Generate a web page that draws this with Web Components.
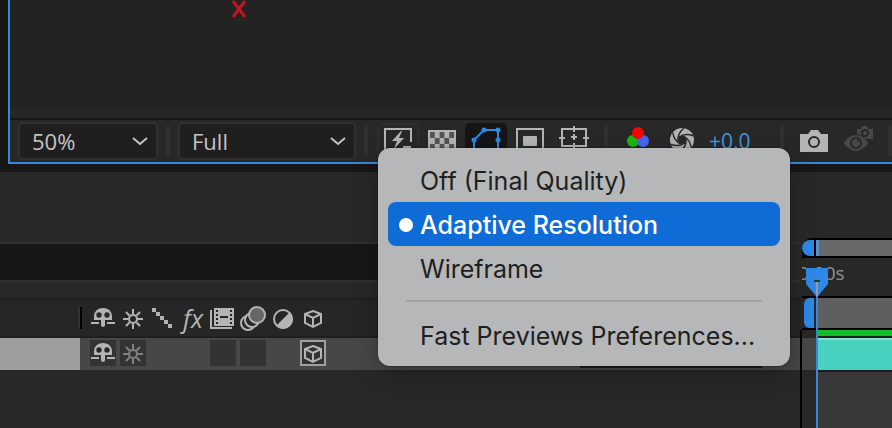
<!DOCTYPE html>
<html lang="en">
<head>
<meta charset="utf-8">
<meta name="viewport" content="width=device-width, initial-scale=1">
<title>Composition</title>
<style>
html, body {
    height: 100%;
}
body {
    margin: 0;
    background: #171717;
    color: #b8b8b8;
    font-family: "Open Sans", "Noto Sans", sans-serif;
    overflow: hidden;
    --blue: #3a87d9;
    --panel: #282828;
    --light: #b4b4b4;
}
</style>
</head>
<body>
<ae-workspace></ae-workspace>
<script>
class Widget extends HTMLElement {
    constructor() {
        super();
        this.attachShadow({ mode: "open" });
    }
    connectedCallback() {
        this.shadowRoot.innerHTML = `<style>
            :host { display: block; box-sizing: border-box; }
            * { box-sizing: border-box; }
            ${this.css()}
        </style>${this.render()}`;
    }
    css() {
        return "";
    }
    render() {
        return "<slot></slot>";
    }
}

const box = (x, y, w, h, fill = "currentColor") => `<rect x="${x}" y="${y}" width="${w}" height="${h}" fill="${fill}"/>`;
const dot = (x, y, r, fill = "currentColor") => `<circle cx="${x}" cy="${y}" r="${r}" fill="${fill}"/>`;
const line = (d, width = 2, color = "currentColor") => `<path d="${d}" fill="none" stroke="${color}" stroke-width="${width}"/>`;
const spin = (count, x, y, content) => Array.from({ length: count }, (_, i) =>
    `<g transform="rotate(${i * 360 / count} ${x} ${y})">${content}</g>`).join("");

function checker() {
    let html = "";
    for (let row = 0; row < 4; row++) {
        for (let col = 0; col < 5; col++) {
            if ((row + col) % 2 === 0) {
                html += box(3 + col * 4.8, 6 + row * 6, 4.8, 6, "#555");
            }
        }
    }
    return html;
}

function sprockets() {
    let html = "";
    for (let y of [5, 9, 13, 17]) {
        html += box(6, y, 2, 2, "#262626") + box(20, y, 2, 2, "#262626");
    }
    return html;
}

// toolbar glyphs are drawn on a 30px grid, switch glyphs on a 26px grid
const ICONS = {
    chevron: [16, line("M1 5l7 6 7-6")],
    cross: [18, line("M3 1l12 16M15 1L3 17", 3)],
    fast: [30, line("M2 28V3h26v13M20 21h8") + `<path d="M18 5L9 15h5l-3 8 10-11h-5l3-7z" fill="currentColor"/>`],
    grid: [30, box(1, 4, 28, 26) + checker()],
    mask: [30, line("M3 26V14L13 4h14v22") + dot(3, 14, 2.5) + dot(13, 4, 2.5) + dot(27, 4, 2.5) + dot(27, 14, 2.5)],
    region: [30, line("M2 3h26v24H2z") + `<rect x="8" y="10" width="14" height="10" rx="1" fill="currentColor"/>`],
    guides: [30, line("M3 3h24v17H3zM15 0v6M15 17v6M0 12h6M24 12h6M12 11h6M15 8v6")],
    channels: [30, dot(10, 15, 6, "#1db80f") + dot(20, 15, 6, "#4468f5") + dot(15, 7, 6, "#f80404")],
    aperture: [30, dot(15, 14, 12) + dot(15, 14, 4, "#282828") + spin(6, 15, 14, line("M11 15Q10 8 17 2", 1.4, "#282828"))],
    camera: [30, `<path d="M1 8h8l3-4h7l3 4h7v18H1z" fill="currentColor"/><circle cx="15" cy="16" r="5" fill="none" stroke="#282828" stroke-width="2"/>`],
    snapshot: [30, `<path d="M14 3h4l1-3h5l1 3h5v10h-7l-9-4z" fill="currentColor"/><circle cx="22" cy="7" r="3" fill="none" stroke="#282828" stroke-width="2"/>
        <path d="M0 17Q13 0 26 17Q13 34 0 17z" fill="currentColor" stroke="#282828"/><circle cx="13" cy="17" r="6" fill="#282828"/>` + dot(13, 17, 4) + dot(15, 15, 1, "#282828")],
    shy: [26, `<path d="M4 15V11Q5 3 13 3T22 11V15Z" fill="currentColor"/><rect x="11" y="12" width="4" height="10" rx="2" fill="currentColor"/>` +
        dot(9, 10, 2.7, "#282828") + dot(17, 10, 2.7, "#282828") + line("M1 18h8M17 18h8")],
    sun: [26, line("M17 14a4 4 0 1 1-8 0a4 4 0 1 1 8 0z") + spin(8, 13, 14, line("M13 4v5"))],
    quality: [26, box(2, 3, 4, 4) + box(6, 7, 4, 4) + box(10, 11, 4, 4) + box(14, 15, 4, 4) + box(18, 19, 4, 4)],
    film: [26, box(4, 3, 20, 18) + sprockets() + line("M1 5v18h21") + box(10, 11, 8, 2, "#262626")],
    blur: [26, `<g stroke="currentColor" stroke-width="2" fill="#282828"><circle cx="8" cy="18" r="7"/><circle cx="12" cy="15" r="7"/><circle cx="17" cy="10" r="8" fill="#666"/></g>`],
    adjust: [26, `<circle cx="13" cy="14" r="9" fill="none" stroke="currentColor" stroke-width="2"/><path d="M20 7L6 21A9 9 0 0 0 20 7z" fill="currentColor"/>`],
    cube: [26, line("M13 6l8 3v9l-8 4-8-4V9zM5 9l8 4 8-4M13 13v9")]
};

customElements.define("ae-icon", class extends Widget {
    css() {
        return `
            :host { flex: none; }
            svg { display: block; }
        `;
    }
    render() {
        let [size, content] = ICONS[this.getAttribute("name")];
        return `<svg width="${size}" height="${size}" viewBox="0 0 ${size} ${size}" aria-hidden="true">${content}</svg>`;
    }
});

customElements.define("ae-dropdown", class extends Widget {
    css() {
        return `
            :host { display: grid; align-items: center; flex: none; height: 38px; }
            select, ae-icon { grid-area: 1 / 1; }
            select {
                appearance: none;
                width: 100%;
                height: 100%;
                padding: 0 40px 0 12px;
                border: 2px solid #303030;
                border-radius: 5px;
                background: #1f1f1f;
                color: #c4c4c4;
                font: 500 22px/32px "Open Sans", sans-serif;
            }
            ae-icon { justify-self: end; margin-right: 10px; color: #c4c4c4; pointer-events: none; }
        `;
    }
    render() {
        let options = this.getAttribute("options").split(",");
        return `<select aria-label="${this.getAttribute("label")}">
            ${options.map(e => `<option>${e}</option>`).join("")}
        </select><ae-icon name="chevron"></ae-icon>`;
    }
});

customElements.define("ae-tool", class extends Widget {
    css() {
        return `
            :host { flex: none; width: 42px; height: 36px; color: var(--light); }
            :host([framed]) button { border: 2px solid #2e2e2e; }
            :host([active]) { color: #2e88e6; }
            :host([active]) button { background: #151515; }
            :host([disabled]) { color: #484848; }
            :host([wide]) { width: 66px; color: #4297de; }
            :host([wide]) button { justify-content: flex-start; padding: 0 4px; }
            button {
                display: flex;
                align-items: center;
                justify-content: center;
                width: 100%;
                height: 100%;
                padding: 0;
                border: 0;
                border-radius: 5px;
                background: none;
                color: inherit;
                font: 500 21px/32px "Open Sans", sans-serif;
            }
        `;
    }
    render() {
        let name = this.getAttribute("name");
        return `<button type="button" aria-label="${this.getAttribute("label")}">
            ${name ? `<ae-icon name="${name}"></ae-icon>` : "<slot></slot>"}
        </button>`;
    }
});

customElements.define("ae-toolbar", class extends Widget {
    css() {
        return `
            :host {
                display: flex;
                align-items: center;
                gap: 8px;
                height: 44px;
                padding-left: 8px;
                border-top: 2px solid #171717;
                background: var(--panel);
                overflow: hidden;
            }
            .zoom { width: 140px; }
            .resolution { width: 178px; }
            .group { display: flex; flex: none; gap: 2px; padding: 0 1px; }
            hr { flex: none; width: 4px; height: 30px; margin: 0; border: 0; background: #303030; }
        `;
    }
    render() {
        return `
            <ae-dropdown class="zoom" label="Magnification" options="50%,100%,200%"></ae-dropdown>
            <hr>
            <ae-dropdown class="resolution" label="Resolution" options="Full,Half,Third,Quarter"></ae-dropdown>
            <hr>
            <div class="group">
                <ae-tool name="fast" label="Fast previews" framed></ae-tool>
                <ae-tool name="grid" label="Transparency grid"></ae-tool>
                <ae-tool name="mask" label="Mask visibility" active></ae-tool>
                <ae-tool name="region" label="Region of interest"></ae-tool>
                <ae-tool name="guides" label="Grid and guides"></ae-tool>
            </div>
            <hr>
            <div class="group">
                <ae-tool name="channels" label="Channels"></ae-tool>
                <ae-tool name="aperture" label="Reset exposure"></ae-tool>
                <ae-tool label="Exposure" wide>+0.0</ae-tool>
            </div>
            <hr>
            <div class="group">
                <ae-tool name="camera" label="Take snapshot"></ae-tool>
                <ae-tool name="snapshot" label="Show snapshot" disabled></ae-tool>
            </div>
            <hr>
        `;
    }
});

customElements.define("ae-viewer", class extends Widget {
    css() {
        return `
            :host {
                margin: 0 0 8px 8px;
                border: solid var(--blue);
                border-width: 0 0 2px 2px;
            }
            .canvas { position: relative; height: 110px; background: #232323; }
            .anchor { position: absolute; left: 220px; top: 0; color: #c01420; }
            .edge { height: 8px; background: #272727; }
        `;
    }
    render() {
        return `
            <div class="canvas"><ae-icon class="anchor" name="cross"></ae-icon></div>
            <div class="edge"></div>
            <ae-toolbar></ae-toolbar>
        `;
    }
});

customElements.define("ae-switches", class extends Widget {
    css() {
        return `
            :host { display: flex; gap: 4px; color: var(--light); }
            span, button {
                display: flex;
                align-items: center;
                justify-content: center;
                flex: none;
                width: 26px;
                height: 26px;
                padding: 0;
                border: 0;
                background: none;
                color: inherit;
            }
            i { font: italic 25px/26px "Open Sans", sans-serif; }
            button { background: #333; }
            .dim { color: #808080; }
            .on { border: 2px solid #a0a0a0; }
        `;
    }
    render() {
        if (this.hasAttribute("layer")) {
            return `
                <button type="button" aria-label="Shy"><ae-icon name="shy"></ae-icon></button>
                <button type="button" aria-label="Collapse" class="dim"><ae-icon name="sun"></ae-icon></button>
                <span></span>
                <span></span>
                <button type="button" aria-label="Frame blending"></button>
                <button type="button" aria-label="Motion blur"></button>
                <span></span>
                <button type="button" aria-label="3D layer" class="on"><ae-icon name="cube"></ae-icon></button>
            `;
        }
        return ["shy", "sun", "quality", "fx", "film", "blur", "adjust", "cube"].map(e =>
            `<span>${e === "fx" ? "<i>fx</i>" : `<ae-icon name="${e}"></ae-icon>`}</span>`).join("");
    }
});

customElements.define("ae-layers", class extends Widget {
    css() {
        return `
            :host { flex: 1; min-width: 0; background: var(--panel); }
            .top { height: 72px; border-bottom: 2px solid #303030; }
            .search { height: 36px; margin-right: 100px; background: #171717; }
            .strip { height: 18px; border-top: 2px solid #303030; }
            .header {
                display: flex;
                align-items: center;
                gap: 8px;
                height: 40px;
                padding-left: 78px;
                border: solid #1e1e1e;
                border-width: 2px 0;
                background: #262626;
            }
            .divider { width: 4px; height: 22px; border: solid #333; border-width: 0 0 0 2px; background: #000; }
            .layer { display: flex; height: 32px; padding-right: 38px; background: #474747; }
            .name { width: 80px; margin-right: 10px; background: #9e9e9e; }
            .layer ae-switches { padding-top: 2px; }
            .parent { width: 182px; height: 30px; margin-left: auto; background: #1a1a1a; }
        `;
    }
    render() {
        return `
            <div class="top"></div>
            <div class="search"></div>
            <div class="strip"></div>
            <div class="header"><div class="divider"></div><ae-switches></ae-switches></div>
            <div class="layer">
                <div class="name"></div>
                <ae-switches layer></ae-switches>
                <div class="parent"></div>
            </div>
        `;
    }
});

customElements.define("ae-ruler", class extends Widget {
    css() {
        return `
            :host {
                position: relative;
                display: flex;
                flex-direction: column;
                flex: 0 0 92px;
                padding-top: 66px;
                background: var(--panel);
                overflow: hidden;
            }
            .bar { display: flex; flex: none; border: solid #000; border-width: 2px 0; background: #000; }
            .navigator { height: 20px; margin-left: 2px; border-top-left-radius: 10px; }
            .cap { width: 12px; margin-right: 2px; border-radius: 8px 0 0 8px; background: #2e88e6; }
            .span { flex: 1; background: #686868; }
            .navigator .span { border-left: 3px solid #5790cc; }
            .time {
                display: flex;
                flex: none;
                height: 38px;
                margin-left: 2px;
                color: #919191;
                font-size: 19px;
                font-weight: 500;
                line-height: 30px;
                overflow: hidden;
            }
            .time span { margin-left: -4px; }
            .area { height: 34px; margin-left: 2px; padding-left: 2px; background: var(--panel); }
            .area .cap { width: 10px; margin-right: 4px; border-radius: 6px 0 0 6px; }
            .area .span { background: #5f5f5f; }
            .tracks { flex: 1; border-left: 2px solid #000; }
            .cache { height: 8px; margin-left: 16px; border-bottom: 2px solid #202020; background: #14bf25; }
            .track { height: 32px; padding-left: 16px; background: #474747; }
            .clip { height: 100%; border-top: 2px solid #8adfd2; background: #48d1bf; }
            .empty { height: 100%; margin-left: 16px; border-top: 2px solid #1b1b1b; background: #383838; }
            .playhead { position: absolute; left: 6px; top: 96px; bottom: 0; display: flex; flex-direction: column; align-items: center; }
            .playhead svg { display: block; flex: none; }
            .stem { flex: 1; width: 2px; background: var(--blue); }
        `;
    }
    render() {
        return `
            <div class="bar navigator"><div class="cap"></div><div class="span"></div></div>
            <div class="time"><span>0:00s</span></div>
            <div class="bar area"><div class="cap"></div><div class="span"></div></div>
            <div class="tracks">
                <div class="cache"></div>
                <div class="track"><div class="clip"></div></div>
                <div class="empty"></div>
            </div>
            <div class="playhead">
                <svg width="22" height="28" viewBox="0 0 22 28" aria-hidden="true">
                    <path d="M0 0h22v16L12 28h-2L0 16z" fill="#2e88e6"/>
                    <path d="M11 13v15" stroke="#999" stroke-width="2"/>
                    <path d="M8 13h6" stroke="#333" stroke-width="2"/>
                </svg>
                <div class="stem"></div>
            </div>
        `;
    }
});

customElements.define("ae-menu-item", class extends Widget {
    css() {
        return `
            button {
                display: flex;
                align-items: center;
                width: 100%;
                height: 44px;
                padding: 2px 10px 0 11px;
                border: 0;
                border-radius: 8px;
                background: none;
                color: #1e1f21;
                font: 25px/32px Inter, sans-serif;
                text-align: left;
                white-space: nowrap;
            }
            .mark { flex: none; width: 14px; height: 14px; margin-right: 7px; border-radius: 50%; }
            :host([checked]) button { background: #0f6bd6; color: #fff; font-weight: 500; }
            :host([checked]) .mark { background: #fff; }
        `;
    }
    render() {
        return `<button type="button" role="menuitemradio" aria-checked="${this.hasAttribute("checked")}">
            <span class="mark"></span><slot></slot>
        </button>`;
    }
});

customElements.define("ae-menu", class extends Widget {
    css() {
        return `
            :host {
                width: 412px;
                padding: 10px 10px 9px;
                border-radius: 12px;
                background: #b6b7b9;
                box-shadow: 0 0 2px #0008, 0 8px 24px #0004;
            }
        `;
    }
});

customElements.define("ae-workspace", class extends Widget {
    css() {
        return `
            :host { position: relative; display: flex; flex-direction: column; min-height: 100%; }
            .timeline { display: flex; flex: 1; }
            ae-menu { position: absolute; left: 378px; top: 148px; }
            hr { height: 2px; margin: 10px 18px 11px; border: 0; background: #a0a1a3; }
        `;
    }
    render() {
        return `
            <ae-viewer></ae-viewer>
            <div class="timeline">
                <ae-layers></ae-layers>
                <ae-ruler></ae-ruler>
            </div>
            <ae-menu role="menu">
                <ae-menu-item>Off (Final Quality)</ae-menu-item>
                <ae-menu-item checked>Adaptive Resolution</ae-menu-item>
                <ae-menu-item>Wireframe</ae-menu-item>
                <hr>
                <ae-menu-item>Fast Previews Preferences...</ae-menu-item>
            </ae-menu>
        `;
    }
});
</script>
</body>
</html>
